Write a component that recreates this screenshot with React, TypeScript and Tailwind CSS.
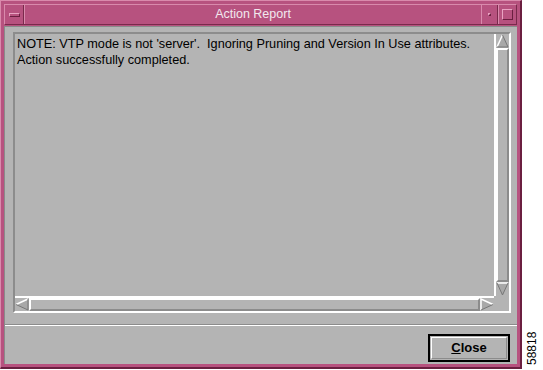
import React from "react";

export default function App() {
  return (
    <div className="w-[543px] h-[370px] bg-white flex" style={{ fontFamily: '"Liberation Sans", Arial, sans-serif' }}>
      {/* window */}
      <div className="w-[522px] h-[369px] bg-[#b7527f] border-l border-t border-[#d98aac] border-r-2 border-b-2 border-r-[#6b1f40] border-b-[#6b1f40] flex flex-col p-[3px]">
        {/* title bar */}
        <div className="h-[21px] flex border border-[#d98aac] border-b-[#7a2a4c] border-r-[#7a2a4c]">
          <div className="w-[19px] flex items-center justify-center border-r border-[#7a2a4c]">
            <div className="w-[11px] h-[4px] border border-[#e9a3c2] border-b-[#6b1f40] border-r-[#6b1f40]" />
          </div>
          <div className="flex-1 flex items-center justify-center text-[12.5px] text-[#f2e8ee] border-l border-[#d98aac]">Action Report</div>
          <div className="w-[17px] flex items-center justify-center border-l border-[#d98aac] border-r border-r-[#7a2a4c]">
            <div className="w-[3px] h-[3px] border border-[#e9a3c2] border-b-[#6b1f40] border-r-[#6b1f40]" />
          </div>
          <div className="w-[18px] flex items-center justify-center border-l border-[#d98aac]">
            <div className="w-[11px] h-[11px] border border-[#e9a3c2] border-b-[#6b1f40] border-r-[#6b1f40]" />
          </div>
        </div>
        {/* client area */}
        <div className="flex-1 bg-[#b4b4b4] mt-[1px] flex flex-col border-t border-l border-[#8a8a8a]">
          <div className="flex flex-col pl-[8px] pr-[6px] pt-[5px]">
            {/* scrolled window */}
            <div className="h-[281px] flex flex-col border-t-2 border-l-2 border-[#8c8c8c] border-b-2 border-r-2 border-b-white border-r-white">
              <div className="flex flex-1 min-h-0">
                <div className="flex-1 px-[2px] pt-[2px] text-[12.7px] leading-[16px] text-black whitespace-pre">
                  {"NOTE: VTP mode is not 'server'.  Ignoring Pruning and Version In Use attributes.\nAction successfully completed."}
                </div>
                {/* vertical scrollbar */}
                <div className="w-[15px] bg-[#b4b4b4] flex flex-col border-l-2 border-white">
                  <svg width="13" height="14" viewBox="0 0 13 14" className="block">
                    <polygon points="6.5,1 12,13 1,13" fill="#a8a8a8" />
                    <polyline points="1,13 6.5,1" stroke="#ffffff" strokeWidth="1.5" fill="none" />
                    <polyline points="6.5,1 12,13 1,13" stroke="#777" strokeWidth="1" fill="none" />
                  </svg>
                  <div className="flex-1 border-t-2 border-l-2 border-white border-r-2 border-r-[#8c8c8c] border-b-2 border-b-[#8c8c8c]" />
                  <svg width="13" height="14" viewBox="0 0 13 14" className="block">
                    <polygon points="1,1 12,1 6.5,13" fill="#a8a8a8" />
                    <polyline points="1,1 12,1" stroke="#ffffff" strokeWidth="1.5" fill="none" />
                    <polyline points="12,1 6.5,13 1,1" stroke="#777" strokeWidth="1" fill="none" />
                  </svg>
                </div>
              </div>
              {/* horizontal scrollbar */}
              <div className="h-[15px] flex border-t-2 border-white mr-[15px]">
                <svg width="14" height="13" viewBox="0 0 14 13" className="block">
                  <polygon points="1,6.5 13,1 13,12" fill="#a8a8a8" />
                  <polyline points="13,1 1,6.5" stroke="#ffffff" strokeWidth="1.5" fill="none" />
                  <polyline points="1,6.5 13,12 13,1" stroke="#777" strokeWidth="1" fill="none" />
                </svg>
                <div className="flex-1 border-t-2 border-l-2 border-white border-r-2 border-r-[#8c8c8c] border-b-2 border-b-[#8c8c8c]" />
                <svg width="14" height="13" viewBox="0 0 14 13" className="block">
                  <polygon points="1,1 13,6.5 1,12" fill="#a8a8a8" />
                  <polyline points="1,12 1,1 13,6.5" stroke="#ffffff" strokeWidth="1.5" fill="none" />
                  <polyline points="13,6.5 1,12" stroke="#777" strokeWidth="1" fill="none" />
                </svg>
              </div>
            </div>
          </div>
          {/* separator */}
          <div className="h-[2px] mt-[11px] border-t border-[#8c8c8c] border-b border-b-white" />
          {/* button row */}
          <div className="flex-1 flex items-start justify-end pr-[7px] pt-[8px]">
            <div className="w-[82px] h-[28px] border-2 border-black p-[1px]">
              <div className="w-full h-full border border-white border-r-[#8c8c8c] border-b-[#8c8c8c] flex items-center justify-center text-[13px] font-bold text-black">
                <span><span className="underline">C</span>lose</span>
              </div>
            </div>
          </div>
        </div>
      </div>
      <div className="flex-1 relative">
        <div className="absolute left-[4px] top-[365px] origin-top-left -rotate-90 text-[12px] text-black leading-none">58818</div>
      </div>
    </div>
  );
}
